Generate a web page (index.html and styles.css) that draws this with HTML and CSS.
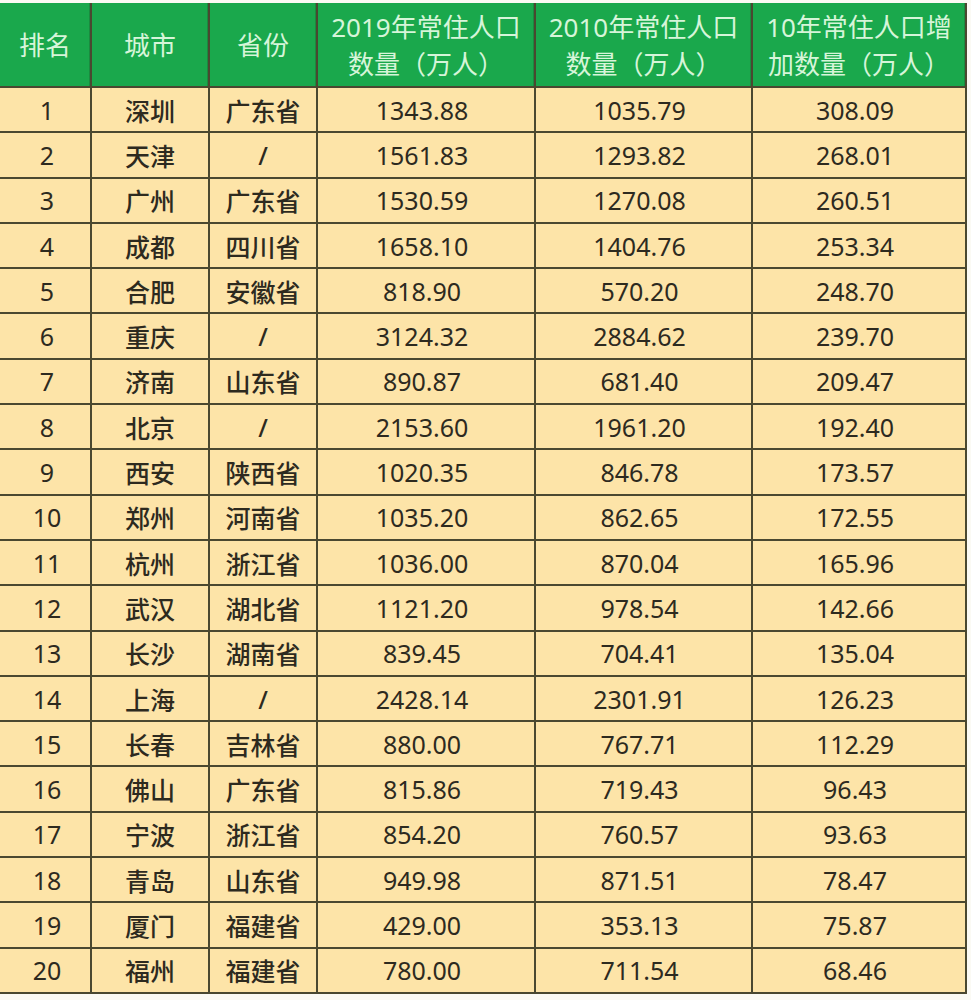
FILE: index.html
```html
<!DOCTYPE html>
<html lang="zh-CN">
<head>
<meta charset="utf-8">
<title>常住人口增加数量</title>
<link rel="stylesheet" href="styles.css">
</head>
<body>
<div class="page">
  <div class="table">
    <div class="th">排名</div>
    <div class="th">城市</div>
    <div class="th">省份</div>
    <div class="th">2019年常住人口<br>数量（万人）</div>
    <div class="th">2010年常住人口<br>数量（万人）</div>
    <div class="th">10年常住人口增<br>加数量（万人）</div>

    <div class="td rank">1</div><div class="td name">深圳</div><div class="td name">广东省</div><div class="td num">1343.88</div><div class="td num">1035.79</div><div class="td num">308.09</div>
    <div class="td rank">2</div><div class="td name">天津</div><div class="td name">/</div><div class="td num">1561.83</div><div class="td num">1293.82</div><div class="td num">268.01</div>
    <div class="td rank">3</div><div class="td name">广州</div><div class="td name">广东省</div><div class="td num">1530.59</div><div class="td num">1270.08</div><div class="td num">260.51</div>
    <div class="td rank">4</div><div class="td name">成都</div><div class="td name">四川省</div><div class="td num">1658.10</div><div class="td num">1404.76</div><div class="td num">253.34</div>
    <div class="td rank">5</div><div class="td name">合肥</div><div class="td name">安徽省</div><div class="td num">818.90</div><div class="td num">570.20</div><div class="td num">248.70</div>
    <div class="td rank">6</div><div class="td name">重庆</div><div class="td name">/</div><div class="td num">3124.32</div><div class="td num">2884.62</div><div class="td num">239.70</div>
    <div class="td rank">7</div><div class="td name">济南</div><div class="td name">山东省</div><div class="td num">890.87</div><div class="td num">681.40</div><div class="td num">209.47</div>
    <div class="td rank">8</div><div class="td name">北京</div><div class="td name">/</div><div class="td num">2153.60</div><div class="td num">1961.20</div><div class="td num">192.40</div>
    <div class="td rank">9</div><div class="td name">西安</div><div class="td name">陕西省</div><div class="td num">1020.35</div><div class="td num">846.78</div><div class="td num">173.57</div>
    <div class="td rank">10</div><div class="td name">郑州</div><div class="td name">河南省</div><div class="td num">1035.20</div><div class="td num">862.65</div><div class="td num">172.55</div>
    <div class="td rank">11</div><div class="td name">杭州</div><div class="td name">浙江省</div><div class="td num">1036.00</div><div class="td num">870.04</div><div class="td num">165.96</div>
    <div class="td rank">12</div><div class="td name">武汉</div><div class="td name">湖北省</div><div class="td num">1121.20</div><div class="td num">978.54</div><div class="td num">142.66</div>
    <div class="td rank">13</div><div class="td name">长沙</div><div class="td name">湖南省</div><div class="td num">839.45</div><div class="td num">704.41</div><div class="td num">135.04</div>
    <div class="td rank">14</div><div class="td name">上海</div><div class="td name">/</div><div class="td num">2428.14</div><div class="td num">2301.91</div><div class="td num">126.23</div>
    <div class="td rank">15</div><div class="td name">长春</div><div class="td name">吉林省</div><div class="td num">880.00</div><div class="td num">767.71</div><div class="td num">112.29</div>
    <div class="td rank">16</div><div class="td name">佛山</div><div class="td name">广东省</div><div class="td num">815.86</div><div class="td num">719.43</div><div class="td num">96.43</div>
    <div class="td rank">17</div><div class="td name">宁波</div><div class="td name">浙江省</div><div class="td num">854.20</div><div class="td num">760.57</div><div class="td num">93.63</div>
    <div class="td rank">18</div><div class="td name">青岛</div><div class="td name">山东省</div><div class="td num">949.98</div><div class="td num">871.51</div><div class="td num">78.47</div>
    <div class="td rank">19</div><div class="td name">厦门</div><div class="td name">福建省</div><div class="td num">429.00</div><div class="td num">353.13</div><div class="td num">75.87</div>
    <div class="td rank">20</div><div class="td name">福州</div><div class="td name">福建省</div><div class="td num">780.00</div><div class="td num">711.54</div><div class="td num">68.46</div>
  </div>
</div>
</body>
</html>
```

FILE: styles.css
```css
html, body {
  margin: 0;
  padding: 0;
  background: #fbfaf4;
}

.page {
  padding-top: 3px;
  width: 971px;
  font-family: "Noto Sans", "Noto Sans CJK SC", sans-serif;
}

.table {
  display: grid;
  width: 967px;
  box-sizing: border-box;
  grid-template-columns: 90px 116px 106px 216px 215px 212px;
  grid-template-rows: 83px repeat(20, 43.3px);
  gap: 2px;
  padding: 0 2px 2px 0;
  background: #4a4830;
}

.th {
  background: #1aa84c;
  color: #d6f5d9;
  font-size: 26px;
  line-height: 37px;
  display: flex;
  align-items: center;
  justify-content: center;
  text-align: center;
  padding-top: 2px;
  box-shadow: inset -1px 0 0 #1a8a3f;
}

.td {
  background: #fde4a8;
  color: #2d2a1f;
  font-size: 25px;
  display: flex;
  align-items: center;
  justify-content: center;
  white-space: nowrap;
}

.rank {
  padding-left: 4px;
}

.name {
  font-weight: 500;
}

.num {
  padding-right: 8px;
}
```
